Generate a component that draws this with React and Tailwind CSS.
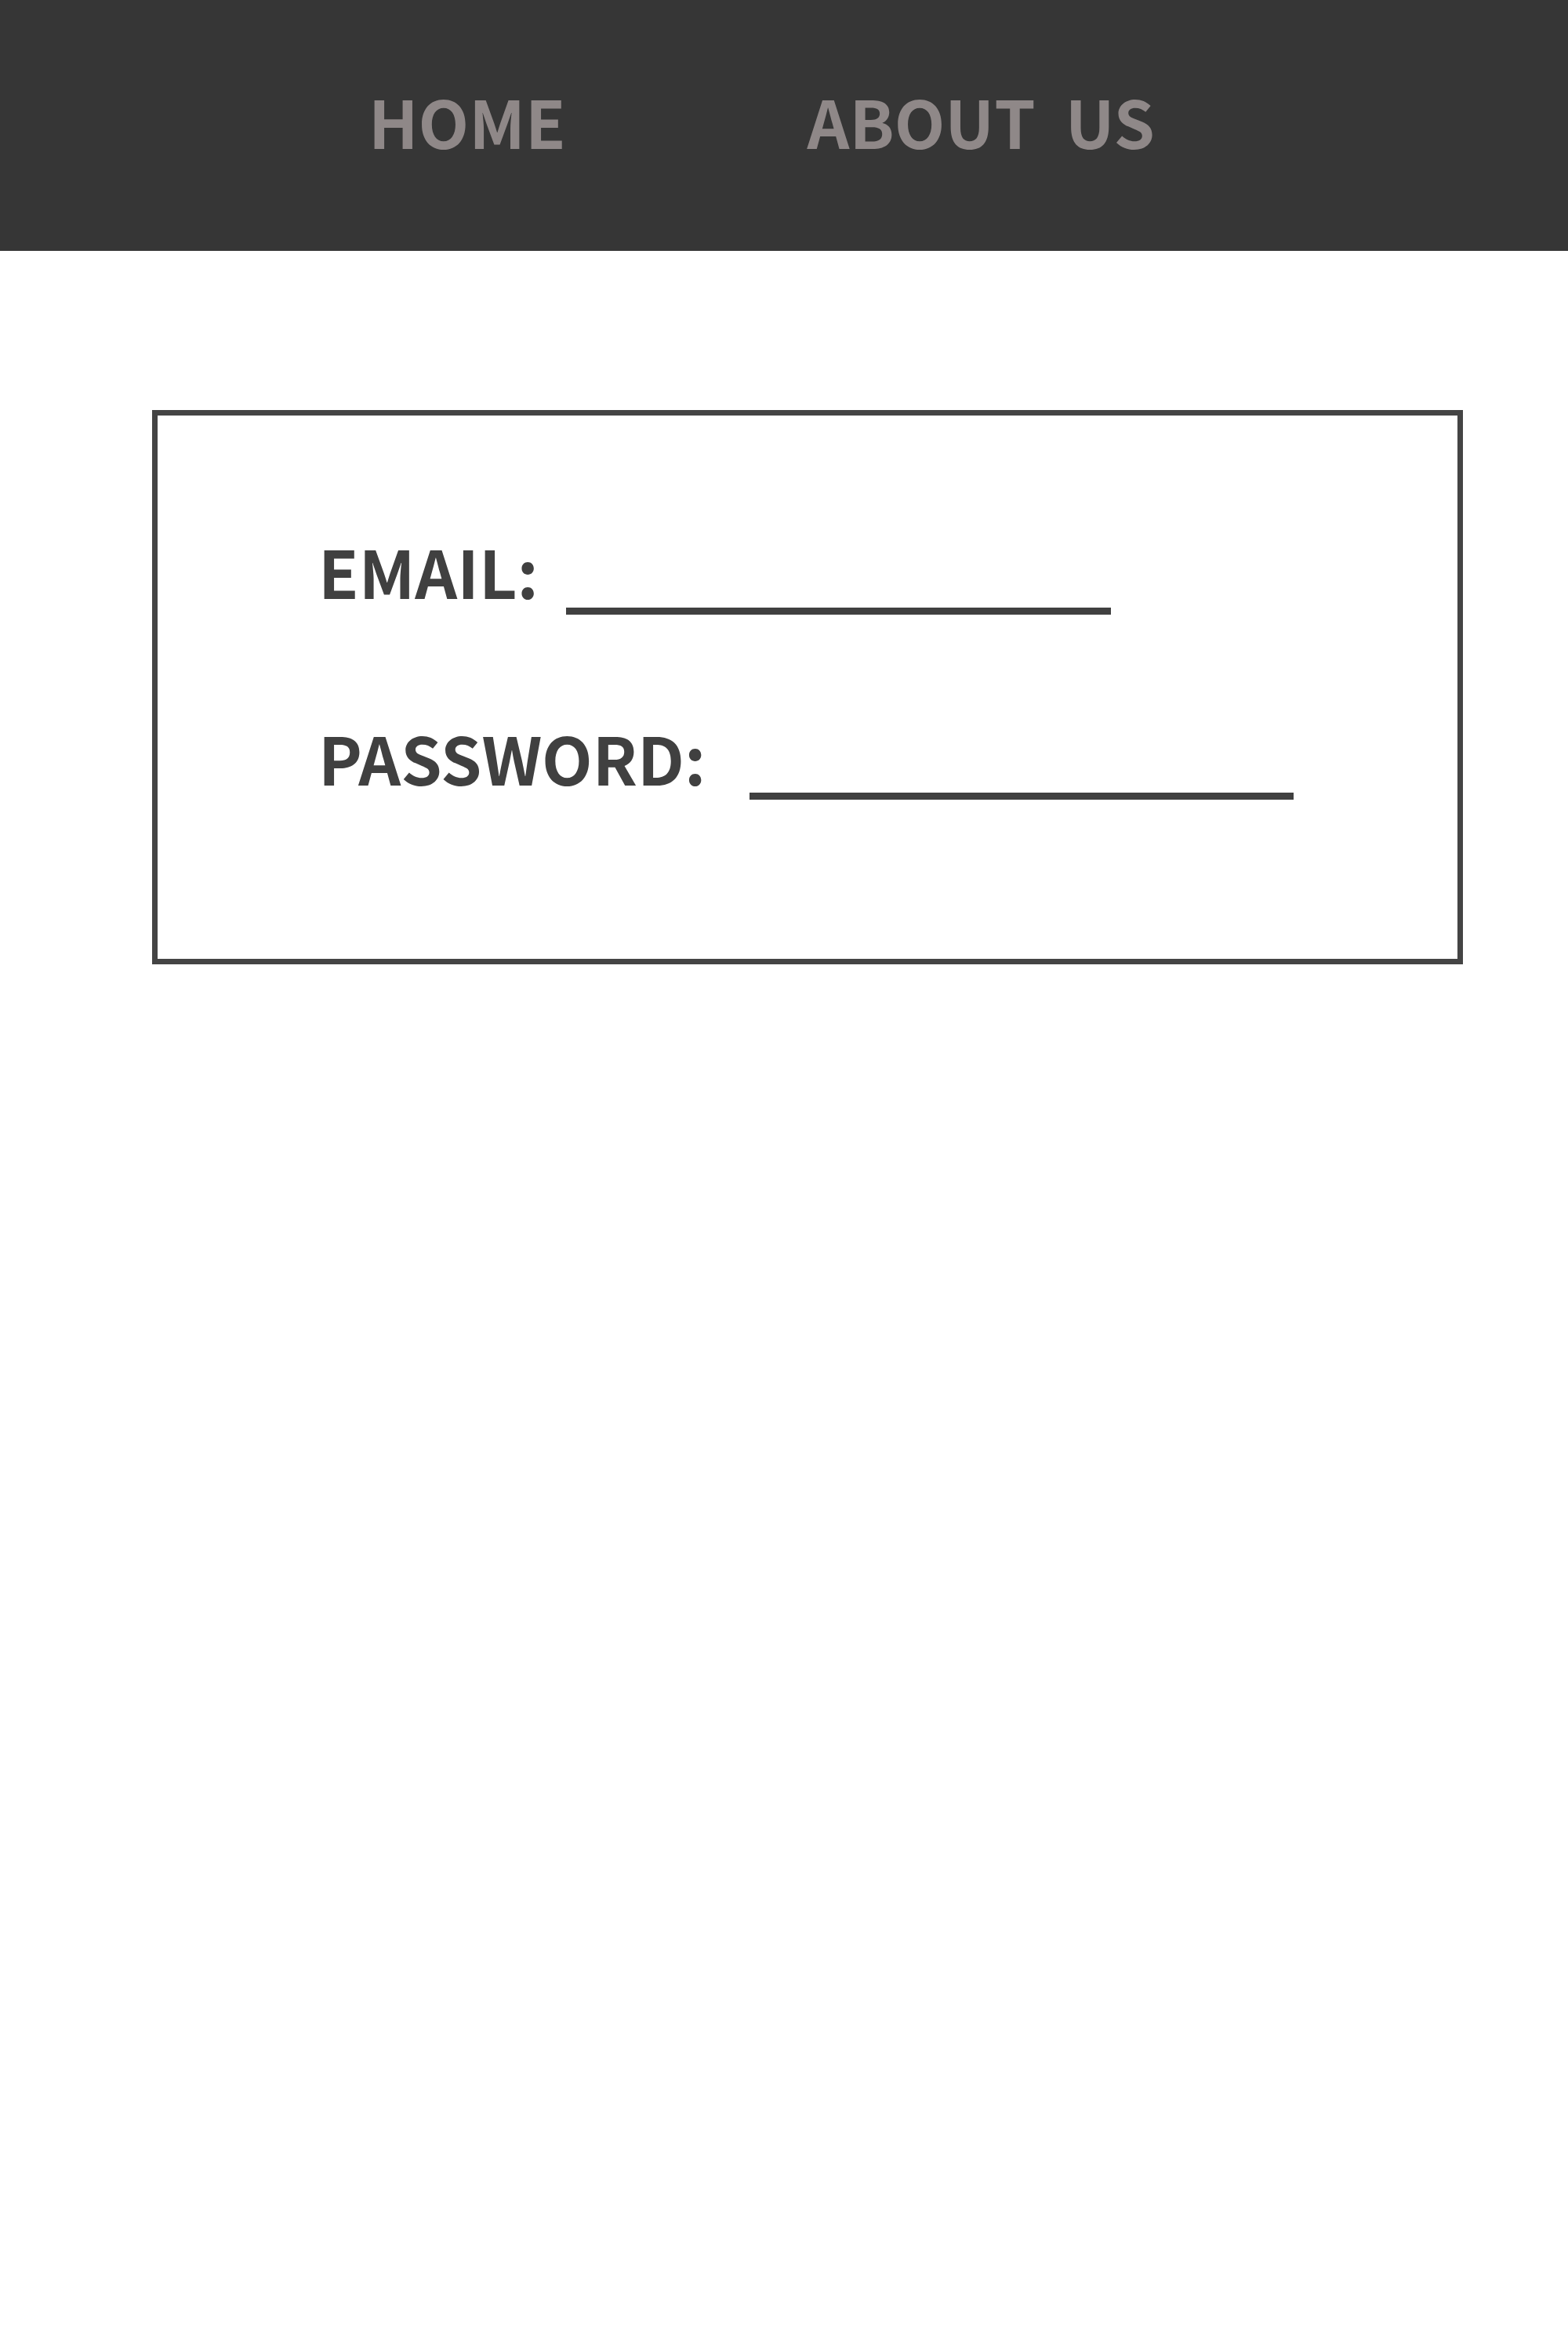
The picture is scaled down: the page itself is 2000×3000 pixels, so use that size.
export default function App() {
    return (
        <div
            className="min-h-screen bg-white"
            style={{ fontFamily: '"Noto Sans CJK SC", "Noto Sans", sans-serif' }}
        >
            {/* Top navigation */}
            <nav className="h-[320px] bg-[#363636] flex items-center pl-[470px] gap-[308px]">
                <a className="text-[84px] font-semibold leading-none text-[#8f8888] -translate-y-[6px]">HOME</a>
                <a className="text-[84px] font-semibold leading-none text-[#8f8888] whitespace-pre -translate-y-[6px]">
                    ABOUT  US
                </a>
            </nav>

            {/* Login box */}
            <div className="mt-[203px] ml-[194px] w-[1672px] h-[707px] border-[7px] border-[#444444] pl-[205px] pt-[156px]">
                <div className="flex items-baseline gap-[35px]">
                    <span className="text-[84px] font-semibold leading-none text-[#404040]">EMAIL:</span>
                    <div className="w-[695px] h-[9px] bg-[#404040] translate-y-[20px]" />
                </div>
                <div className="flex items-baseline gap-[56px] mt-[154px]">
                    <span className="text-[84px] font-semibold leading-none text-[#404040]">PASSWORD:</span>
                    <div className="w-[694px] h-[9px] bg-[#404040] translate-y-[18px]" />
                </div>
            </div>
        </div>
    );
}
